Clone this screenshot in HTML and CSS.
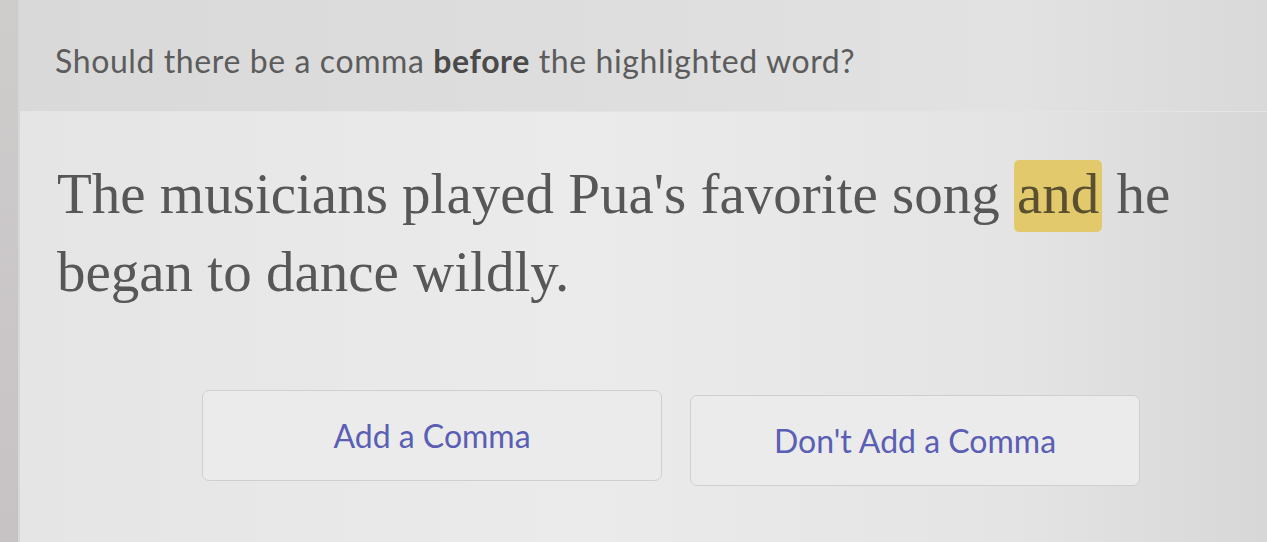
FILE: index.html
```html
<!DOCTYPE html>
<html lang="en">
<head>
    <meta charset="UTF-8">
    <meta name="viewport" content="width=device-width, initial-scale=1.0">
    <title>Comma Practice</title>
    <link rel="stylesheet" href="styles.css">
</head>
<body>
    <div class="page">
        <aside class="rail"></aside>

        <main class="panel">
            <header class="prompt">
                Should there be a comma <b>before</b> the highlighted word?
            </header>

            <section class="passage">
                <p>The musicians played Pua's favorite song <mark>and</mark> he began to dance wildly.</p>
            </section>

            <div class="choices">
                <button class="choice" type="button">Add a Comma</button>
                <button class="choice" type="button">Don't Add a Comma</button>
            </div>
        </main>
    </div>
</body>
</html>
```

FILE: styles.css
```css
html, body {
    margin: 0;
    height: 100%;
}
body {
    font-family: Lato, "Open Sans", sans-serif;
    background: #e2e2e2;
    overflow: hidden;
}
.page {
    display: flex;
    height: 542px;
}
.rail {
    width: 18px;
    flex-shrink: 0;
    background: linear-gradient(180deg, #cfcccc, #c7c3c5);
    border-right: 2px solid #d8d6d6;
}
.panel {
    flex: 1;
    display: flex;
    flex-direction: column;
    background: linear-gradient(90deg, #e6e5e5 0%, #ecebeb 45%, #e5e4e4 80%, #d8d7d7 100%);
}
.prompt {
    height: 112px;
    box-sizing: border-box;
    padding: 41px 0 0 35px;
    font-size: 32px;
    letter-spacing: 0.6px;
    color: #5c5c5c;
    background: linear-gradient(90deg, #d9d9d9 0%, #dedede 50%, #e2e2e2 80%, #d9d9d9 100%);
    border-bottom: 1px solid #e4e4e4;
}
.prompt b {
    color: #4a4a4a;
    font-weight: 700;
}
.passage {
    padding: 43px 0 0 37px;
}
.passage p {
    margin: 0;
    max-width: 1180px;
    font-family: "Liberation Serif", "Times New Roman", serif;
    font-size: 57px;
    line-height: 78px;
    color: #575757;
}
.passage mark {
    background: #e2c96c;
    color: #5a5030;
    border-radius: 5px;
    padding: 2px 3px 7px;
}
.choices {
    display: flex;
    gap: 28px;
    padding: 79px 0 0 182px;
}
.choice {
    width: 460px;
    height: 91px;
    font-family: Lato, "Open Sans", sans-serif;
    font-size: 32px;
    color: #5a5eb4;
    background: #ebebeb;
    border: 1px solid #cfcfcf;
    border-radius: 7px;
    cursor: pointer;
}
.choice + .choice {
    width: 450px;
    margin-top: 5px;
}
```
